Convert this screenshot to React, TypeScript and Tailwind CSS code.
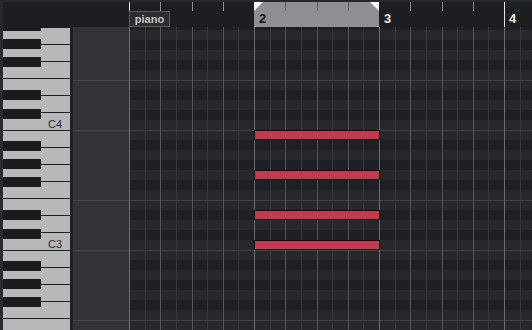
import React from "react";

const ROWS = Array.from({ length: 31 }, (_, i) => {
  const p = 58 - i;
  const pc = ((p % 12) + 12) % 12;
  return { black: [1, 3, 6, 8, 10].includes(pc), line: pc === 11 || pc === 4 };
});

const VLINES = Array.from({ length: 26 }, (_, k) => {
  const x = Math.round(129 + 15.625 * k) - 129;
  const type = k % 8 === 0 ? "bar" : k % 2 === 0 ? "beat" : "eighth";
  return { x, type, k };
});

const NOTES = [130, 170, 210, 240];

function Rows({ shaded }: { shaded: boolean }) {
  return (
    <div className="flex flex-col -mt-[7px]">
      {ROWS.map((r, i) => (
        <div
          key={i}
          className={
            "h-[10px] shrink-0 " +
            (r.line ? (shaded ? "border-t border-[#3f4145] " : "border-t border-[#47484c] ") : "") +
            (shaded ? (r.black ? "bg-[#1f2023]" : "bg-[#26282b]") : "")
          }
        />
      ))}
    </div>
  );
}

function Piano() {
  const octaves = [10, 130, 250, 370];
  const whiteLines: { y: number; full: boolean }[] = [];
  const blacks: number[] = [];
  octaves.forEach((c) => {
    for (let k = 0; k < 7; k++) {
      whiteLines.push({ y: Math.floor(c - (k * 120) / 7), full: k === 0 || k === 3 });
    }
    [21, 40, 73, 91, 109].forEach((o) => blacks.push(c - o));
  });
  return (
    <div className="relative w-[67px] h-full overflow-hidden bg-[#b7b8ba]">
      <svg width="67" height="303" viewBox="3 27 67 303" className="block">
        <rect x="3" y="27" width="67" height="303" fill="#b7b8ba" />
        {whiteLines.map((l, i) => (
          <rect key={i} x={l.full ? 3 : 41} y={l.y} width={l.full ? 67 : 29} height="1" fill="#1c1d1f" />
        ))}
        {blacks.map((y, i) => (
          <rect key={i} x="3" y={y} width="38" height="10" fill="#1a1b1d" />
        ))}
      </svg>
      <span className="absolute right-[8px] top-[92px] text-[11px] leading-none text-[#2b2b2d] font-['Liberation_Sans',sans-serif]">
        C4
      </span>
      <span className="absolute right-[8px] top-[212px] text-[11px] leading-none text-[#2b2b2d] font-['Liberation_Sans',sans-serif]">
        C3
      </span>
    </div>
  );
}

function Ruler() {
  return (
    <div className="relative flex-1 bg-[#1d1e21] overflow-hidden font-['Liberation_Sans',sans-serif]">
      {VLINES.filter((l) => l.type === "beat").map((l) => (
        <div
          key={l.k}
          className={"absolute top-0 h-[9px] w-px " + (l.x > 125 && l.x < 250 ? "bg-[#606164]" : "bg-[#88898c]")}
          style={{ left: l.x }}
        />
      ))}
      {/* bar 1 */}
      <div className="absolute left-0 top-0 h-[9px] w-px bg-[#e6e6e6]" />
      <div className="absolute left-0 top-[9px] w-[41px] h-[16px] border border-[#5a5b5e] bg-[#2c2d30] flex items-center justify-center">
        <span className="text-[11px] leading-none font-bold text-[#c6c6c8]">piano</span>
      </div>
      {/* loop region */}
      <div className="absolute left-[125px] top-0 w-[125px] h-[25px] bg-[#8e8f92]">
        {[156, 188, 219].map((x) => (
          <div key={x} className="absolute top-0 h-[9px] w-px bg-[#5f6063]" style={{ left: x - 125 }} />
        ))}
        <svg className="absolute left-0 top-0" width="9" height="9" viewBox="0 0 9 9">
          <polygon points="0,0 9,0 0,9" fill="#ffffff" />
        </svg>
        <svg className="absolute right-0 top-0" width="9" height="9" viewBox="0 0 9 9">
          <polygon points="0,0 9,0 9,9" fill="#ffffff" />
        </svg>
        <span className="absolute left-[5px] top-[10px] text-[13px] leading-none font-bold text-[#111113]">2</span>
      </div>
      <span className="absolute left-[255px] top-[10px] text-[13px] leading-none font-bold text-[#ececec]">3</span>
      <div className="absolute left-[375px] top-0 h-[25px] w-px bg-[#e6e6e6]" />
      <span className="absolute left-[380px] top-[10px] text-[13px] leading-none font-bold text-[#ececec]">4</span>
    </div>
  );
}

function Grid() {
  return (
    <div className="relative flex-1 h-full overflow-hidden bg-[#232427]">
      <Rows shaded />
      <div className="absolute inset-0">
        {VLINES.map((l) => (
          <div
            key={l.k}
            className={
              "absolute top-0 bottom-0 w-px " +
              (l.type === "bar" ? "bg-[#6b6d71]" : l.type === "beat" ? "bg-[#535559]" : "bg-[#36383c]")
            }
            style={{ left: l.x }}
          />
        ))}
      </div>
      {NOTES.map((y) => (
        <div
          key={y}
          className="absolute left-[125px] h-[10px] w-[126px] border border-[#0e0e10] bg-[#c13a4f]"
          style={{ top: y - 27 }}
        />
      ))}
    </div>
  );
}

export default function App() {
  return (
    <div className="w-[532px] h-[330px] flex flex-col overflow-hidden bg-[#1d1e21]">
      <div className="h-[2px] shrink-0 bg-[#28292c]" />
      <div className="h-[25px] shrink-0 flex">
        <div className="w-[3px] bg-[#28292c]" />
        <div className="w-[126px] bg-[#1d1e21]" />
        <Ruler />
      </div>
      <div className="flex-1 min-h-0 flex">
        <div className="w-[3px] bg-[#2a2b2e]" />
        <Piano />
        <div className="w-[3px] bg-[#1f2023]" />
        <div className="w-[56px] h-full overflow-hidden bg-[#323337]">
          <Rows shaded={false} />
        </div>
        <Grid />
      </div>
    </div>
  );
}
